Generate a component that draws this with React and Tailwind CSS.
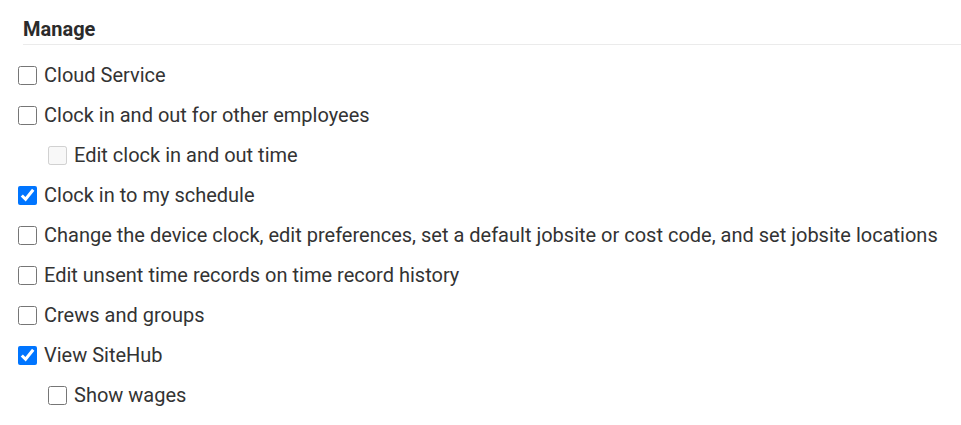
import React from "react";

const items = [
  { label: "Cloud Service", checked: false },
  { label: "Clock in and out for other employees", checked: false },
  { label: "Edit clock in and out time", checked: false, indent: true, disabled: true },
  { label: "Clock in to my schedule", checked: true },
  { label: "Change the device clock, edit preferences, set a default jobsite or cost code, and set jobsite locations", checked: false },
  { label: "Edit unsent time records on time record history", checked: false },
  { label: "Crews and groups", checked: false },
  { label: "View SiteHub", checked: true },
  { label: "Show wages", checked: false, indent: true },
];

export default function App() {
  return (
    <div className="w-[961px] h-[425px] bg-white text-[#333333]" style={{ fontFamily: "Roboto, 'Noto Sans', sans-serif" }}>
      <div className="pt-[16px] pl-[23px]">
        <div className="border-b border-[#ebebeb] pb-[2px] text-[20px] leading-[26px] font-bold text-[#2b2b2b]">Manage</div>
      </div>
      <div className="pt-[10px] pl-[18px]">
        {items.map((it, i) => (
          <label key={i} className={`flex items-center h-[40px] text-[20px] ${it.indent ? "pl-[30px]" : ""}`}>
            <input
              type="checkbox"
              defaultChecked={it.checked}
              disabled={it.disabled}
              className="w-[19px] h-[19px] m-0 mr-[7px] shrink-0"
            />
            <span>{it.label}</span>
          </label>
        ))}
      </div>
    </div>
  );
}
